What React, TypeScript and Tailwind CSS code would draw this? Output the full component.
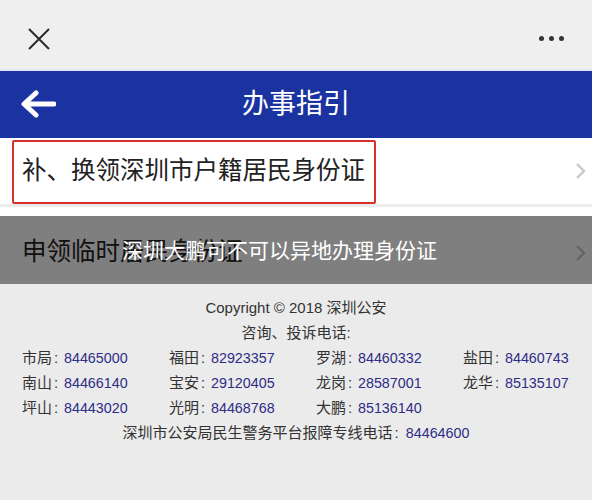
import React from 'react';

const FONT = { fontFamily: '"Liberation Sans", "Noto Sans CJK SC", sans-serif' };

const phones: [string, string][] = [
  ['市局', '84465000'],
  ['福田', '82923357'],
  ['罗湖', '84460332'],
  ['盐田', '84460743'],
  ['南山', '84466140'],
  ['宝安', '29120405'],
  ['龙岗', '28587001'],
  ['龙华', '85135107'],
  ['坪山', '84443020'],
  ['光明', '84468768'],
  ['大鹏', '85136140'],
];

function Chevron({ className }: { className?: string }) {
  return (
    <svg width="11" height="18" viewBox="0 0 11 18" className={className}>
      <path d="M2 2 L9 9 L2 16" fill="none" stroke="currentColor" strokeWidth="2.4" />
    </svg>
  );
}

export default function App() {
  return (
    <div className="w-[592px] h-[500px] bg-[#ebebeb] overflow-hidden text-[#333]" style={FONT}>
      {/* Browser top bar */}
      <div className="h-[69px] bg-[#efefef] flex items-center justify-between pl-[27px] pr-[28px] pt-[8px]">
        <svg width="24" height="24" viewBox="0 0 24 24">
          <path d="M2 2 L22 22 M22 2 L2 22" stroke="#2a2a2a" strokeWidth="2" />
        </svg>
        <div className="flex gap-[5px]">
          <span className="w-[5px] h-[5px] rounded-full bg-[#333]" />
          <span className="w-[5px] h-[5px] rounded-full bg-[#333]" />
          <span className="w-[5px] h-[5px] rounded-full bg-[#333]" />
        </div>
      </div>
      <div className="h-[2px] bg-[#dfe5f2]" />

      {/* Blue header */}
      <div className="h-[67px] bg-[#1b33a0] flex items-center relative">
        <svg width="36" height="30" viewBox="0 0 36 30" className="absolute left-[20px] top-[18px]">
          <path d="M34 15 H6 M16 4 L4 15 L16 26" fill="none" stroke="#fff" strokeWidth="5" strokeLinecap="round" strokeLinejoin="round" />
        </svg>
        <h1 className="flex-1 text-center text-white text-[27px] leading-none">办事指引</h1>
      </div>

      {/* Row 1 */}
      <div className="h-[66px] bg-white flex items-center justify-between pl-[22px] pr-[6px] relative">
        <span className="text-[24.5px] text-[#222]">补、换领深圳市户籍居民身份证</span>
        <Chevron className="text-[#c8c8c8]" />
        <div className="absolute left-[12px] top-[2px] w-[364px] h-[64px] border-2 border-[#d9302c] rounded-[2px]" />
      </div>
      <div className="h-[3px] bg-[#ebebeb]" />

      {/* Row 2 with caption overlay */}
      <div className="h-[77px] bg-white relative">
        <div className="h-full flex items-center justify-between pl-[22px] pr-[6px] pt-[14px]">
          <span className="text-[24.5px] text-[#222]">申领临时居民身份证</span>
          <Chevron className="text-[#c8c8c8]" />
        </div>
        <div className="absolute left-0 right-0 top-[9px] bottom-0 bg-black/50 flex items-center pl-[122px]">
          <span className="text-white text-[21px] leading-none">深圳大鹏可不可以异地办理身份证</span>
        </div>
      </div>

      {/* Footer */}
      <div className="pt-[11px] text-[15px] leading-[25px] text-[#333]">
        <p className="text-center">Copyright © 2018 深圳公安</p>
        <p className="text-center">咨询、投诉电话:</p>
        <div className="grid grid-cols-[147px_147px_147px_147px] pl-[22px]">
          {phones.map(([name, num]) => (
            <div key={name} className="flex items-baseline whitespace-nowrap h-[25px]">
              <span className="w-[42px] shrink-0">
                {name}
                <span className="ml-[2px]">:</span>
              </span>
              <span className="text-[#2e2c86] text-[14.3px]">{num}</span>
            </div>
          ))}
        </div>
        <p className="text-center">
          深圳市公安局民生警务平台报障专线电话<span className="ml-[2px] mr-[7px]">:</span>
          <span className="text-[#2e2c86] text-[14.3px]">84464600</span>
        </p>
      </div>
    </div>
  );
}
